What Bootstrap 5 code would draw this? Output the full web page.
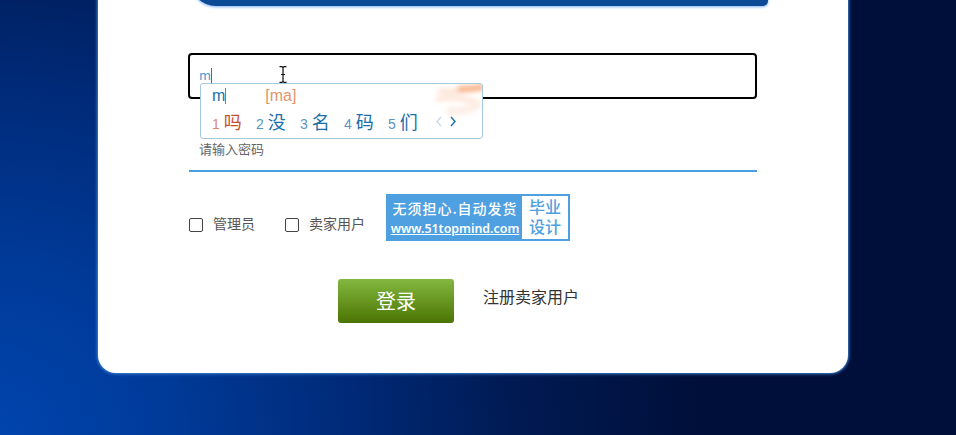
<!DOCTYPE html>
<html lang="zh-CN">
<head>
    <meta charset="UTF-8">
    <meta name="viewport" content="width=device-width, initial-scale=1.0">
    <title>用户登录</title>
    <link href="https://cdn.jsdelivr.net/npm/bootstrap@5.3.3/dist/css/bootstrap.min.css" rel="stylesheet">
    <style type="text/css">
        /* page background */
        html, body {
            height: 435px;
            overflow: hidden;
        }
        body {
            font-family: "Noto Sans CJK SC", sans-serif;
            background: radial-gradient(circle 700px at 0 435px, #0044ad 0%, #003a98 25%, #002a78 50%, #001a52 74%, #000f3a 100%);
        }

        /* white login panel, its top is cut by the window */
        .login-box {
            width: 750px;
            height: 393px;
            margin: -20px 0 0 98px;
            background: #fff;
            border-radius: 18px;
            box-shadow: 0 0 3px 1px #3f86d6;
        }
        .login-head {
            width: 578px;
            height: 26px;
            margin-left: 92px;
            background: #0b4a94;
            border-radius: 0 0 5px 26px;
            box-shadow: 0 1px 3px #7fb0ee;
        }
        .login-form {
            width: 569px;
            margin-left: 90px;
            position: relative;
        }

        /* account input with focus border */
        .user-input {
            height: 46px;
            margin-top: 47px;
            padding: 10px 0 0 9px;
            border: 2px solid #000;
            border-radius: 4px;
            font-size: 13px;
            line-height: 20px;
            color: #4b9ad0;
        }
        .caret-mark {
            display: inline-block;
            width: 1px;
            height: 15px;
            background: #2a78b4;
            vertical-align: -3px;
        }
        .pwd-row {
            height: 73px;
            margin-left: 1px;
            padding: 41px 0 0 10px;
            border-bottom: 2px solid #4a9fe2;
            font-size: 13px;
            line-height: 18px;
            color: #666;
        }

        .check-row {
            height: 85px;
            margin-top: 22px;
            font-size: 14px;
            color: #555;
        }
        .check-box {
            width: 14px;
            height: 14px;
            margin: 24px 10px 0 1px;
            border: 1px solid #444;
            border-radius: 2px;
            flex: none;
        }
        .check-text {
            margin-top: 19px;
        }
        .check-gap {
            margin-right: 29px;
        }
        .ad-banner {
            width: 184px;
            height: 47px;
            margin-left: 21px;
            padding: 2px;
            background: #4ea0e0;
        }
        .ad-left {
            width: 134px;
            color: #fff;
            text-align: center;
            white-space: nowrap;
        }
        .ad-title {
            font-size: 14px;
            font-weight: 500;
            letter-spacing: 1px;
            line-height: 24px;
        }
        .ad-url {
            font-family: "Noto Sans", sans-serif;
            font-size: 12.400px;
            font-weight: 600;
            line-height: 18px;
            text-decoration: underline;
        }
        .ad-right {
            flex: 1;
            background: #fff;
            color: #4ea0e0;
            font-family: "Liberation Sans", "Noto Sans CJK SC", sans-serif;
            font-size: 16px;
            font-weight: 500;
            line-height: 20px;
            text-align: center;
            padding-top: 2px;
        }

        .submit-row {
            margin-left: 150px;
        }
        .btn.btn-login {
            width: 116px;
            height: 44px;
            padding: 0;
            border: 0;
            border-radius: 3px;
            background: linear-gradient(#83b83f, #4b7402);
            color: #fff;
            font-size: 20px;
        }
        .reg-link {
            margin: -10px 0 0 29px;
            color: #333;
            font-size: 16px;
            text-decoration: none;
        }

        /* IME candidate popup, sits over the form */
        .ime-box {
            position: absolute;
            left: 12px;
            top: 30px;
            width: 283px;
            height: 56px;
            background: #fff;
            border: 1px solid #a6c8dc;
            border-radius: 3px;
            overflow: hidden;
            font-family: "Liberation Sans", "Noto Sans CJK SC", sans-serif;
        }
        .ime-swirl {
            position: absolute;
            right: 0;
            top: 0;
        }
        .ime-top {
            height: 24px;
            padding: 1px 0 0 11px;
            font-size: 16px;
            line-height: 22px;
            color: #1b6ea8;
        }
        .ime-top .caret-mark {
            height: 16px;
            background: #d0603a;
        }
        .ime-pinyin {
            margin-left: 39px;
            color: #e3946c;
        }
        .ime-list {
            height: 30px;
            padding-left: 11px;
            font-size: 14px;
            line-height: 26px;
            color: #5b94bd;
        }
        .ime-item {
            width: 44px;
            white-space: nowrap;
        }
        .ime-item b {
            font-family: "Noto Sans CJK SC", sans-serif;
            font-size: 18px;
            font-weight: 400;
            color: #1b6ea8;
            margin-left: 4px;
        }
        .ime-first {
            color: #dc8a68;
        }
        .ime-first b {
            color: #c9502c;
        }
        .ime-arrows {
            margin: 6px 0 0 2px;
        }

        /* mouse text cursor */
        .text-cursor {
            position: absolute;
            left: 90px;
            top: 13px;
        }
    </style>
    <script src="https://cdn.jsdelivr.net/npm/bootstrap@5.3.3/dist/js/bootstrap.bundle.min.js"></script>
</head>
<body>
    <div class="login-box">
        <div class="login-head"></div>
        <form class="login-form">
            <div class="user-input">m<span class="caret-mark"></span></div>
            <svg class="text-cursor" width="10" height="17" viewBox="0 0 10 17">
                <path d="M1.500 .7H4L5 1.700 6 .7H8.500M5 1.700V15.300M1.500 16.300H4L5 15.300 6 16.300H8.500M3 8.500H7" fill="none" stroke="#111" stroke-width="1.200"/>
            </svg>

            <div class="ime-box">
                <svg class="ime-swirl" width="50" height="36" viewBox="0 0 50 36">
                    <defs><filter id="soft" x="-20%" y="-40%" width="140%" height="180%"><feGaussianBlur stdDeviation="2.500"/></filter></defs>
                    <g fill="none" stroke-linecap="round" filter="url(#soft)">
                        <path d="M8 7C20 8 32 7 48 4" stroke="#fce3d4" stroke-width="5"/>
                        <path d="M28 5C35 5 42 5 50 3" stroke="#f8b084" stroke-width="6"/>
                        <path d="M6 15C18 12 30 14 44 18" stroke="#fde3d5" stroke-width="5"/>
                        <path d="M18 27C28 28 38 26 46 20" stroke="#fdeee6" stroke-width="8"/>
                    </g>
                </svg>
                <div class="ime-top position-relative">m<span class="caret-mark"></span><span class="ime-pinyin">[ma]</span></div>
                <div class="ime-list d-flex position-relative">
                    <span class="ime-item ime-first">1<b>吗</b></span>
                    <span class="ime-item">2<b>没</b></span>
                    <span class="ime-item">3<b>名</b></span>
                    <span class="ime-item">4<b>码</b></span>
                    <span class="ime-item">5<b>们</b></span>
                    <svg class="ime-arrows" width="26" height="14" viewBox="0 0 26 14">
                        <path d="M7 3 3 7.500 7 12" fill="none" stroke="#c9d6de" stroke-width="1.200"/>
                        <path d="M17 3 21 7.500 17 12" fill="none" stroke="#1b6ea8" stroke-width="1.400"/>
                    </svg>
                </div>
            </div>

            <div class="pwd-row">请输入密码</div>

            <div class="check-row d-flex align-items-start">
                <span class="check-box"></span>
                <span class="check-text check-gap">管理员</span>
                <span class="check-box"></span>
                <span class="check-text">卖家用户</span>
                <div class="ad-banner d-flex">
                    <div class="ad-left">
                        <div class="ad-title">无须担心.自动发货</div>
                        <div class="ad-url">www.51topmind.com</div>
                    </div>
                    <div class="ad-right">毕业<br>设计</div>
                </div>
            </div>

            <div class="submit-row d-flex align-items-center">
                <button type="button" class="btn btn-login">登录</button>
                <a class="reg-link" href="#">注册卖家用户</a>
            </div>
        </form>
    </div>
</body>
</html>
